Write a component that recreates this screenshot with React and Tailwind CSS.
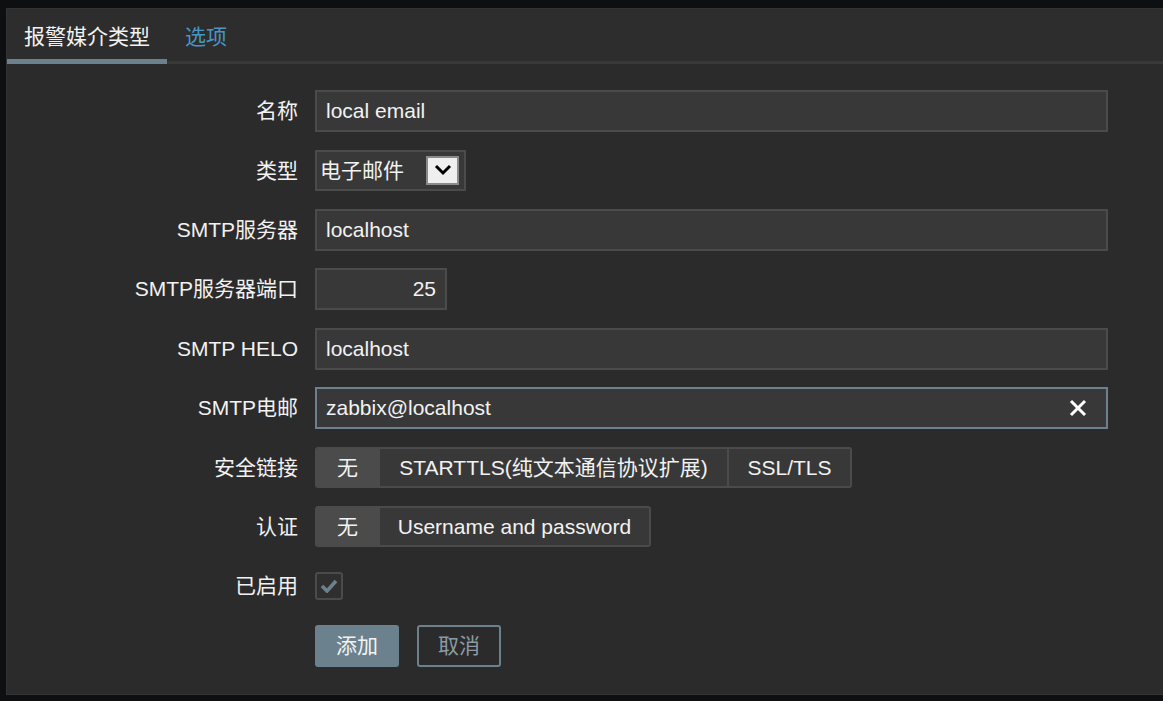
import React, { useState } from 'react';

const font = { fontFamily: '"Liberation Sans", Arial, "Noto Sans CJK SC", sans-serif' };

function Row({ label, children }) {
    return (
        <div className="flex items-center h-[42px]">
            <label className="w-[308px] pr-[17px] text-right text-[21px] text-[#f2f2f2] whitespace-nowrap">{label}</label>
            {children}
        </div>
    );
}

function Segmented({ options, value, onChange }) {
    return (
        <div className="flex h-[41px] border-2 border-[#4b4b4b] rounded-[3px] overflow-hidden">
            {options.map((opt, i) => (
                <button
                    key={opt.label}
                    onClick={() => onChange(i)}
                    className={`${opt.w} h-full text-[21px] text-[#f2f2f2] whitespace-nowrap ${i > 0 ? 'border-l-2 border-[#4b4b4b]' : ''} ${value === i ? 'bg-[#4b4b4b]' : 'bg-[#383838]'}`}
                >
                    {opt.label}
                </button>
            ))}
        </div>
    );
}

export default function App() {
    const [name, setName] = useState('local email');
    const [server, setServer] = useState('localhost');
    const [port, setPort] = useState('25');
    const [helo, setHelo] = useState('localhost');
    const [email, setEmail] = useState('zabbix@localhost');
    const [security, setSecurity] = useState(0);
    const [auth, setAuth] = useState(0);
    const [enabled, setEnabled] = useState(true);

    const inputCls = "h-[42px] bg-[#383838] border-2 border-[#4b4b4b] text-[21px] text-[#f2f2f2] px-[9px] outline-none";

    return (
        <div className="min-h-screen bg-[#0e0f11] pt-[8px] pl-[6px]" style={font}>
            <div className="h-[687px] bg-[#2b2b2b] border border-[#333333] border-r-0">
                <div className="relative h-[55px] bg-[#2d2d2d] border-b-[3px] border-[#393939] flex items-stretch">
                    <div className="relative w-[160px] flex items-center justify-center text-[21px] text-[#f2f2f2] pt-[4px]">
                        报警媒介类型
                        <div className="absolute left-0 right-0 bottom-[-3px] h-[5px] bg-[#6b828e]" />
                    </div>
                    <div className="flex items-center pl-[18px] text-[21px] text-[#4796c4] pt-[4px]">选项</div>
                </div>

                <div className="pt-[26px] flex flex-col gap-[17.4px]">
                    <Row label="名称">
                        <input value={name} onChange={e => setName(e.target.value)} className={`${inputCls} w-[793px]`} />
                    </Row>
                    <Row label="类型">
                        <div className="h-[41px] w-[151px] bg-[#383838] border-2 border-[#4b4b4b] flex items-center pl-[3px] gap-[5px]">
                            <span className="text-[21px] text-[#f2f2f2] w-[101px] whitespace-nowrap">电子邮件</span>
                            <span className="w-[33px] h-[29px] bg-[#efefef] border-2 border-[#8a8a8a] flex items-center justify-center">
                                <svg width="18" height="12" viewBox="0 0 18 12"><path d="M2 2l7 7 7-7" fill="none" stroke="#000" strokeWidth="3" /></svg>
                            </span>
                        </div>
                    </Row>
                    <Row label="SMTP服务器">
                        <input value={server} onChange={e => setServer(e.target.value)} className={`${inputCls} w-[793px]`} />
                    </Row>
                    <Row label="SMTP服务器端口">
                        <input value={port} onChange={e => setPort(e.target.value)} className={`${inputCls} w-[132px] text-right`} />
                    </Row>
                    <Row label="SMTP HELO">
                        <input value={helo} onChange={e => setHelo(e.target.value)} className={`${inputCls} w-[793px]`} />
                    </Row>
                    <Row label="SMTP电邮">
                        <div className="relative">
                            <input value={email} onChange={e => setEmail(e.target.value)} className={`${inputCls} w-[793px] border-[#6b828e]`} />
                            <button onClick={() => setEmail('')} className="absolute right-[20px] top-[11px] text-white">
                                <svg width="20" height="20" viewBox="0 0 20 20"><path d="M3 3l14 14M17 3L3 17" stroke="#fff" strokeWidth="3" /></svg>
                            </button>
                        </div>
                    </Row>
                    <Row label="安全链接">
                        <Segmented
                            value={security}
                            onChange={setSecurity}
                            options={[
                                { label: '无', w: 'w-[61px]' },
                                { label: 'STARTTLS(纯文本通信协议扩展)', w: 'w-[349px]' },
                                { label: 'SSL/TLS', w: 'w-[123px]' },
                            ]}
                        />
                    </Row>
                    <Row label="认证">
                        <Segmented
                            value={auth}
                            onChange={setAuth}
                            options={[
                                { label: '无', w: 'w-[61px]' },
                                { label: 'Username and password', w: 'w-[271px]' },
                            ]}
                        />
                    </Row>
                    <Row label="已启用">
                        <button
                            onClick={() => setEnabled(!enabled)}
                            className="w-[28px] h-[28px] bg-[#2f2f2f] border-2 border-[#4b4b4b] rounded-[3px] flex items-center justify-center"
                        >
                            {enabled && (
                                <svg width="18" height="14" viewBox="0 0 18 14"><path d="M2 7l5 5 9-10" fill="none" stroke="#6b828e" strokeWidth="3.6" /></svg>
                            )}
                        </button>
                    </Row>
                    <div className="flex items-center h-[42px] pl-[308px] gap-[18px]">
                        <button className="w-[84px] h-[42px] bg-[#6b828e] rounded-[3px] text-[21px] text-[#f2f2f2]">添加</button>
                        <button className="w-[84px] h-[42px] border-2 border-[#6b828e] rounded-[3px] text-[21px] text-[#8c9ba3]">取消</button>
                    </div>
                </div>
            </div>
        </div>
    );
}
